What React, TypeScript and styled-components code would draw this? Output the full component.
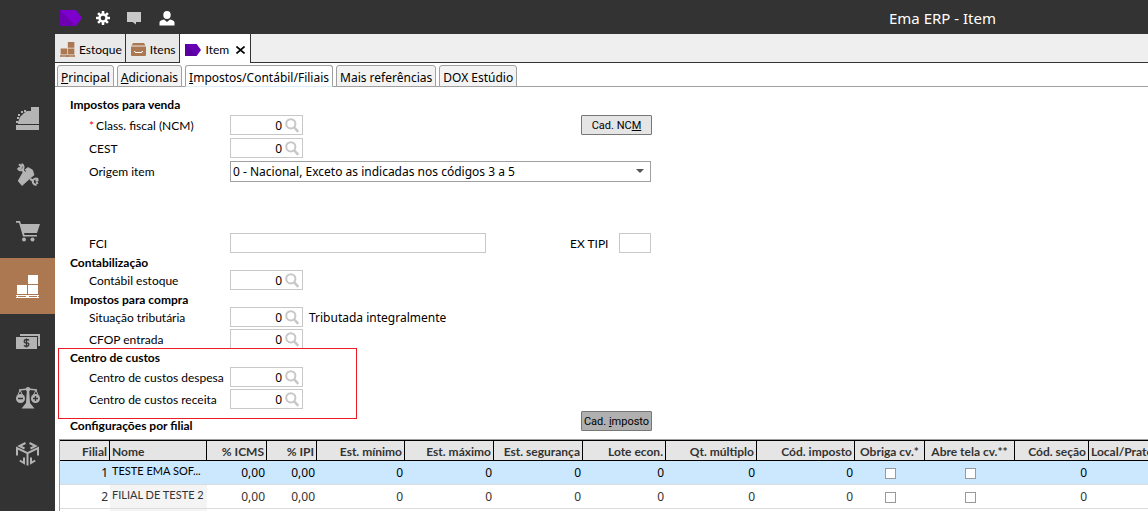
import React, { useState } from 'react';
import styled, { createGlobalStyle, css } from 'styled-components';

const GlobalStyle = createGlobalStyle`
  *, *::before, *::after { box-sizing: border-box; }
  body {
    margin: 0;
    background: #fff;
    color: #000;
    font: 12px/16px Lato, "Noto Sans", sans-serif;
  }
  button, input, select { font: inherit; color: inherit; margin: 0; }
`;

const humanist = '"Noto Sans", Lato, sans-serif';

const Shell = styled.div`
  display: flex;
  height: 100vh;
  overflow: hidden;
`;

const Sidebar = styled.nav`
  display: flex;
  flex-direction: column;
  flex: 0 0 55px;
  padding-top: 90px;
  background: #333;
`;

const SideButton = styled.button<{ $active?: boolean }>`
  display: flex;
  align-items: center;
  justify-content: center;
  flex: 0 0 56px;
  padding: 0;
  border: 0;
  color: ${p => (p.$active ? '#fff' : '#b4b4b4')};
  background: ${p => (p.$active ? '#ac7852' : 'transparent')};
`;

const Main = styled.div`
  display: flex;
  flex-direction: column;
  flex: 1;
  min-width: 0;
`;

const TopBar = styled.header`
  display: flex;
  align-items: center;
  justify-content: space-between;
  flex: 0 0 34px;
  padding: 2px 152px 0 4px;
  background: #333;
  color: #fff;
`;

const TopActions = styled.div`
  display: flex;
  gap: 9px;
`;

const TopButton = styled.button`
  display: flex;
  align-items: center;
  justify-content: center;
  width: 23px;
  height: 20px;
  padding: 0;
  border: 0;
  background: none;
  color: #fff;
`;

const Title = styled.h1`
  margin: 0;
  font-family: ${humanist};
  font-size: 15px;
  line-height: 20px;
  font-weight: 400;
`;

const WindowTabs = styled.div`
  display: flex;
  align-items: flex-start;
  flex: none;
  height: 29px;
  background: #efefef;
  border-bottom: 1px solid #333;
`;

const WindowTab = styled.button<{ $active?: boolean }>`
  display: flex;
  align-items: center;
  gap: ${p => (p.$active ? '5px' : '4px')};
  height: ${p => (p.$active ? '29px' : '28px')};
  padding: 3px ${p => (p.$active ? '5px' : '3px')} 0 5px;
  border: 0;
  border-right: 1px solid #333;
  background: ${p => (p.$active ? '#fff' : '#e9e9e9')};
`;

const PageTabs = styled.div`
  display: flex;
  gap: 3px;
  flex: none;
  height: 24px;
  padding: 2px 2px 0;
  border-bottom: 1px solid #a0a0a0;
`;

const PageTab = styled.button<{ $active?: boolean }>`
  height: 22px;
  padding: 3px 3px 0;
  border: 1px solid #a0a0a0;
  border-bottom-color: ${p => (p.$active ? '#d9eef8' : '#a0a0a0')};
  border-radius: 3px 3px 0 0;
  background: ${p => (p.$active ? '#fff' : '#f3f3f3')};
  font-family: ${humanist};
  white-space: nowrap;
`;

const Form = styled.form`
  display: flex;
  flex-direction: column;
  padding: 10px 0 0 3px;
`;

const Section = styled.section`
  padding: 0 12px 2px;
`;

const HighlightedSection = styled(Section)`
  width: 299px;
  padding: 1px 11px 9px;
  margin-top: -3px;
  border: 1px solid #ed1c24;
`;

const Fields = styled.div<{ $gap?: number; $lead?: number }>`
  display: flex;
  flex-direction: column;
  gap: ${p => p.$gap ?? 2}px;
  padding-top: ${p => p.$lead ?? 0}px;
`;

const Heading = styled.h2`
  margin: 0;
  font-size: 12px;
  line-height: 15px;
  font-weight: 700;
`;

const Row = styled.div<{ $spaced?: boolean }>`
  display: flex;
  align-items: center;
  height: 20px;
  padding-left: 19px;
  margin-top: ${p => (p.$spaced ? '49px' : '0')};
`;

const Label = styled.label`
  flex: 0 0 141px;
  padding-top: 2px;
  white-space: nowrap;
`;

const Required = styled.span`
  margin-right: 2px;
  color: #f00;
`;

const boxed = css`
  height: 20px;
  border: 1px solid #c8c8c8;
  background: #fff;
`;

const Lookup = styled.span`
  ${boxed}
  display: flex;
  align-items: center;
  flex: 0 0 73px;
`;

const LookupInput = styled.input`
  width: 51px;
  height: 18px;
  padding: 0;
  border: 0;
  outline: 0;
  background: none;
  font-family: ${humanist};
  text-align: right;
`;

const LookupButton = styled.button`
  display: flex;
  padding: 0;
  margin-left: 3px;
  border: 0;
  background: none;
  color: #c8c8c8;
`;

const TextInput = styled.input<{ $width: number }>`
  ${boxed}
  width: ${p => p.$width}px;
  padding: 0 3px;
`;

const SideLabel = styled.label`
  width: 49px;
  margin-left: 84px;
  padding-top: 2px;
  white-space: nowrap;
`;

const Description = styled.span`
  padding: 2px 0 0 6px;
  font-family: ${humanist};
`;

const SelectWrap = styled.span`
  display: flex;
  align-items: center;
  width: 421px;
  height: 21px;
  padding-right: 6px;
  border: 1px solid #a0a0a0;
  color: #555;
`;

const Select = styled.select`
  flex: 1;
  height: 19px;
  padding: 1px 2px 0;
  border: 0;
  background: none;
  color: #000;
  font-family: ${humanist};
  appearance: none;
`;

const Button = styled.button<{ $pressed?: boolean }>`
  width: 71px;
  height: 20px;
  padding: 1px 0 0;
  border: 1px solid #777;
  border-radius: 1px;
  background: ${p => (p.$pressed ? '#b0b0b0' : '#e5e5e5')};
  font: 11px/16px Roboto, "Liberation Sans", sans-serif;
`;

const ButtonSlot = styled.span`
  margin-left: 278px;
  display: flex;
`;

const BranchBar = styled.div`
  display: flex;
  align-items: flex-start;
  padding: 0 12px;
  margin-top: -8px;
`;

const BranchHeading = styled(Heading)`
  flex: 0 0 511px;
  padding-top: 7px;
`;

const TableFrame = styled.div`
  flex: none;
  margin: 6px 0 0 4px;
  overflow: hidden;
  border-top: 1px solid #a0a0a0;
  border-left: 1px solid #a0a0a0;
`;

const Table = styled.table`
  width: 1189px;
  table-layout: fixed;
  border-collapse: separate;
  border-spacing: 0;
`;

const Th = styled.th<{ $align?: string }>`
  height: 21px;
  padding: 2px 2px 0;
  border: solid #000;
  border-width: 1px 1px 1px 0;
  background: #e5e5e5;
  color: #333;
  font-weight: 700;
  line-height: 16px;
  text-align: ${p => p.$align ?? 'right'};
  white-space: nowrap;
`;

const Tr = styled.tr<{ $selected?: boolean }>`
  background: ${p => (p.$selected ? '#cce8ff' : '#fff')};
  color: ${p => (p.$selected ? '#000' : '#333')};
`;

const Td = styled.td<{ $center?: boolean }>`
  height: 24px;
  padding: 1px 2px 0;
  border-bottom: 1px solid #dcdcdc;
  font-family: ${humanist};
  text-align: ${p => (p.$center ? 'center' : 'right')};
  vertical-align: middle;
`;

const NameTd = styled.td<{ $selected?: boolean }>`
  height: 24px;
  padding: 0 2px 3px;
  border-bottom: 1px solid #dcdcdc;
  background: ${p => (p.$selected ? 'transparent' : '#f4f4f4')};
  font-size: 11px;
  text-align: left;
  white-space: nowrap;
`;

const Checkbox = styled.input`
  display: block;
  width: 11px;
  height: 11px;
  margin: 0 auto;
  border: 1px solid #999;
  background: #fff;
  appearance: none;
`;

const TagIcon = ({ w = 22, h = 16, color = '#7d00cc' }) => (
  <svg width={w} height={h} viewBox="0 0 22 16" preserveAspectRatio="none" aria-hidden="true">
    <path d="M0 0h16l6 8-6 8H0z" fill={color} />
    <path d="M0 0l16 16H0z" fill="#000" opacity=".12" />
  </svg>
);

const GearIcon = () => (
  <svg width="14" height="14" viewBox="0 0 14 14" aria-hidden="true">
    <g fill="currentColor">
      {[0, 45, 90, 135].map(a => (
        <rect key={a} x="5.7" y="0" width="2.6" height="14" rx=".4" transform={`rotate(${a} 7 7)`} />
      ))}
      <circle cx="7" cy="7" r="4.700" />
    </g>
    <circle cx="7" cy="7" r="2.3" fill="#333" />
  </svg>
);

const ChatIcon = () => (
  <svg width="15" height="14" viewBox="0 0 15 14" aria-hidden="true">
    <path d="M0 1h14v10H9v2.5L5.500 11H0z" fill="#c8c8c8" />
  </svg>
);

const UserIcon = () => (
  <svg width="16" height="15" viewBox="0 0 16 15" aria-hidden="true">
    <ellipse cx="8" cy="4" rx="3.700" ry="4" fill="currentColor" />
    <path d="M.5 14.500V11.500Q.5 9.500 5 8.500l3 2.500 3-2.500q4.500 1 4.500 3v3z" fill="currentColor" />
  </svg>
);

const PalletIcon = ({ w = 23, h = 23, line = '#fff' }) => (
  <svg width={w} height={h} viewBox="0 0 23 23" aria-hidden="true">
    <path d="M12 0h10v9H12zM1 10h10v9H1zM12 10h10v9H12zM0 20h23v1H0zM0 22h23v1H0zM1 20h1v2H1zM10 20h3v2h-3zM21 20h1v2h-1z" fill={line} />
  </svg>
);

const BoxIcon = () => (
  <svg width="15" height="13" viewBox="0 0 15 13" aria-hidden="true">
    <path d="M2 0h11l1.500 2.500H.5z" fill="#ac7852" />
    <path d="M0 3.500h15V12a1 1 0 0 1-1 1H1a1 1 0 0 1-1-1z" fill="#ac7852" />
    <path d="M3.500 8q0 1.500 1.500 1.500h5q1.500 0 1.500-1.500" fill="none" stroke="#fff" />
  </svg>
);

const CloseSvg = styled.svg`
  margin-left: 2px;
`;

const CloseIcon = () => (
  <CloseSvg width="9" height="8" viewBox="0 0 9 8" aria-hidden="true">
    <path d="M.5.5l8 7M8.500.5l-8 7" stroke="#000" strokeWidth="1.600" />
  </CloseSvg>
);

const RegisterIcon = () => (
  <svg width="23" height="23" viewBox="0 0 23 23" aria-hidden="true" fill="currentColor">
    <path d="M15 0h8v17H2v-2l2-5 4-4 3-2h4zM0 18h23v5H0z" />
    <path d="M0 14h2v2H0zM1 10h2v2H1zM2 7h2v2H2zM5 4h2v2H5zM8 3h2v2H8z" />
  </svg>
);

const ToolsIcon = () => (
  <svg width="23" height="23" viewBox="0 0 23 23" aria-hidden="true" fill="none" stroke="currentColor">
    <path d="M3 1.200L5.200 3.200 4.800 5 2 5.200M1.800 5.200a3 3 0 0 0 5 1.200 3.500 3.500 0 0 0-1.300-5.400" strokeWidth="2" />
    <path d="M6 6.500l3 3.500M14 16l3 1.500" strokeWidth="2.400" />
    <path d="M8 7.500L12 4.500 16.500 7 18 12 15.500 14 6 22.500 2.200 18z" fill="currentColor" strokeWidth=".8" />
    <path d="M8 7l2 1.500" stroke="#333" strokeWidth="1" />
    <path d="M22 16.500a3 3 0 0 0-5 1 3.200 3.200 0 0 0 3.500 4.200M22.500 17l-3 .8M21.500 21l-1-2" strokeWidth="2" />
  </svg>
);

const CartIcon = () => (
  <svg width="24" height="24" viewBox="0 -3 24 24" aria-hidden="true" fill="currentColor">
    <path d="M0 0h4l1 3h19l-3 9H8l.5 2H21v1.500H7L3 1.800H0z" />
    <circle cx="8" cy="18.500" r="2" />
    <circle cx="16.500" cy="18.500" r="2" />
  </svg>
);

const MoneyIcon = () => (
  <svg width="24" height="16" viewBox="0 0 24 16" aria-hidden="true">
    <path d="M4 0h20v12h-2V2H4z" fill="currentColor" />
    <path d="M0 3h21v12H0z" fill="currentColor" />
    <path d="M13 6.500q-.5-1-2.500-1T8.200 7.200t2.300 1.700 2.300 1.800-2.300 1.700-2.500-1M10.500 4.500v9" fill="none" stroke="#333" strokeWidth="1.300" />
  </svg>
);

const ScaleIcon = () => (
  <svg width="24" height="22" viewBox="0 0 24 22" aria-hidden="true">
    <path d="M12 2v17M3 3q5-.5 9-1 4 .5 9 1" fill="none" stroke="currentColor" strokeWidth="1.500" />
    <circle cx="12" cy="2.200" r="2.200" fill="currentColor" />
    <path d="M10.800 4h2.400l.8 12 4.500 5.500h-13L10 16z" fill="currentColor" />
    <path d="M4 3L2 8M4 3l2.500 5M20 3l2 5M20 3l-2.500 5" stroke="currentColor" />
    <circle cx="4.500" cy="11.500" r="4.500" fill="currentColor" />
    <circle cx="19.500" cy="11.500" r="4.500" fill="currentColor" />
    <path d="M2 11.500h5M17 11.500h5M19.500 9v5" stroke="#333" strokeWidth="1.300" />
  </svg>
);

const CubeIcon = () => (
  <svg width="23" height="24" viewBox="0 0 23 24" aria-hidden="true" fill="none" stroke="currentColor" strokeWidth="2">
    <path d="M9.500 1L3.500 4 8.500 6.500M13.500 1L19.500 4 14.500 6.500" />
    <path d="M1 13.500V6L11.500 11.200 22 6v7.500M11.500 11v12.500" />
    <path d="M8 15.500V21L3.800 18.500M15 15.500V21l4.200-2.500" />
  </svg>
);

const SearchIcon = () => (
  <svg width="14" height="15" viewBox="0 0 14 15" aria-hidden="true" fill="none" stroke="currentColor">
    <circle cx="5.800" cy="5.800" r="4.600" strokeWidth="2" />
    <path d="M9 9.200l4.300 4.600" strokeWidth="2.600" />
  </svg>
);

const ArrowIcon = () => (
  <svg width="8" height="4" viewBox="0 0 8 4" aria-hidden="true">
    <path d="M0 0h8L4 4z" fill="currentColor" />
  </svg>
);

const sideItems = [
  { name: 'Caixa', icon: <RegisterIcon /> },
  { name: 'Serviços', icon: <ToolsIcon /> },
  { name: 'Compras', icon: <CartIcon /> },
  { name: 'Estoque', icon: <PalletIcon />, active: true },
  { name: 'Financeiro', icon: <MoneyIcon /> },
  { name: 'Fiscal', icon: <ScaleIcon /> },
  { name: 'Produção', icon: <CubeIcon /> },
];

const columns: { title: string; width: number; align?: string }[] = [
  { title: 'Filial', width: 50 },
  { title: 'Nome', width: 97, align: 'left' },
  { title: '% ICMS', width: 60 },
  { title: '% IPI', width: 50 },
  { title: 'Est. mínimo', width: 88 },
  { title: 'Est. máximo', width: 89 },
  { title: 'Est. segurança', width: 89 },
  { title: 'Lote econ.', width: 83 },
  { title: 'Qt. múltiplo', width: 91 },
  { title: 'Cód. imposto', width: 98 },
  { title: 'Obriga cv.*', width: 70, align: 'center' },
  { title: 'Abre tela cv.**', width: 90, align: 'center' },
  { title: 'Cód. seção', width: 74 },
  { title: 'Local/Prateleira', width: 160, align: 'left' },
];

const branches = [
  { id: '1', name: 'TESTE EMA SOF...' },
  { id: '2', name: 'FILIAL DE TESTE 2' },
  { id: '', name: '' },
];

function LookupField({ id, label, required, children }: {
  id: string;
  label: string;
  required?: boolean;
  children?: React.ReactNode;
}) {
  const [value, setValue] = useState('0');
  return (
    <Row>
      <Label htmlFor={id}>
        {required && <Required>*</Required>}
        {label}
      </Label>
      <Lookup>
        <LookupInput id={id} value={value} onChange={e => setValue(e.target.value)} />
        <LookupButton type="button" aria-label={`Pesquisar ${label}`}>
          <SearchIcon />
        </LookupButton>
      </Lookup>
      {children}
    </Row>
  );
}

export default function App() {
  return (
    <>
      <GlobalStyle />
      <Shell>
        <Sidebar>
          {sideItems.map(item => (
            <SideButton key={item.name} $active={item.active} aria-label={item.name}>
              {item.icon}
            </SideButton>
          ))}
        </Sidebar>
        <Main>
          <TopBar>
            <TopActions>
              <TopButton aria-label="Item"><TagIcon /></TopButton>
              <TopButton aria-label="Configurações"><GearIcon /></TopButton>
              <TopButton aria-label="Mensagens"><ChatIcon /></TopButton>
              <TopButton aria-label="Usuário"><UserIcon /></TopButton>
            </TopActions>
            <Title>Ema ERP - Item</Title>
          </TopBar>
          <WindowTabs>
            <WindowTab><PalletIcon w={15} h={15} line="#ac7852" />Estoque</WindowTab>
            <WindowTab><BoxIcon />Itens</WindowTab>
            <WindowTab $active><TagIcon w={16} h={12} color="#6600b3" />Item<CloseIcon /></WindowTab>
          </WindowTabs>
          <PageTabs>
            <PageTab><u>P</u>rincipal</PageTab>
            <PageTab><u>A</u>dicionais</PageTab>
            <PageTab $active><u>I</u>mpostos/Contábil/Filiais</PageTab>
            <PageTab>Mais referências</PageTab>
            <PageTab>DOX Estúdio</PageTab>
          </PageTabs>
          <Form onSubmit={e => e.preventDefault()}>
            <Section>
              <Heading>Impostos para venda</Heading>
              <Fields $gap={3} $lead={3}>
                <LookupField id="ncm" label="Class. fiscal (NCM)" required>
                  <ButtonSlot><Button type="button">Cad. NC<u>M</u></Button></ButtonSlot>
                </LookupField>
                <LookupField id="cest" label="CEST" />
                <Row>
                  <Label htmlFor="origem">Origem item</Label>
                  <SelectWrap>
                    <Select id="origem">
                      <option>0 - Nacional, Exceto as indicadas nos códigos 3 a 5</option>
                    </Select>
                    <ArrowIcon />
                  </SelectWrap>
                </Row>
                <Row $spaced>
                  <Label htmlFor="fci">FCI</Label>
                  <TextInput id="fci" $width={256} />
                  <SideLabel htmlFor="extipi">EX TIPI</SideLabel>
                  <TextInput id="extipi" $width={32} />
                </Row>
              </Fields>
            </Section>
            <Section>
              <Heading>Contabilização</Heading>
              <Fields>
                <LookupField id="contabil" label="Contábil estoque" />
              </Fields>
            </Section>
            <Section>
              <Heading>Impostos para compra</Heading>
              <Fields>
                <LookupField id="situacao" label="Situação tributária">
                  <Description>Tributada integralmente</Description>
                </LookupField>
                <LookupField id="cfop" label="CFOP entrada" />
              </Fields>
            </Section>
            <HighlightedSection>
              <Heading>Centro de custos</Heading>
              <Fields $lead={2}>
                <LookupField id="despesa" label="Centro de custos despesa" />
                <LookupField id="receita" label="Centro de custos receita" />
              </Fields>
            </HighlightedSection>
            <BranchBar>
              <BranchHeading>Configurações por filial</BranchHeading>
              <Button type="button" $pressed>Cad. <u>i</u>mposto</Button>
            </BranchBar>
          </Form>
          <TableFrame>
            <Table>
              <colgroup>
                {columns.map(c => <col key={c.title} width={c.width} />)}
              </colgroup>
              <thead>
                <tr>
                  {columns.map(c => <Th key={c.title} $align={c.align}>{c.title}</Th>)}
                </tr>
              </thead>
              <tbody>
                {branches.map((b, i) => (
                  <Tr key={i} $selected={i === 0}>
                    <Td>{b.id}</Td>
                    <NameTd $selected={i === 0}>{b.name}</NameTd>
                    {columns.slice(2).map((c, n) => (
                      <Td key={c.title} $center={c.align === 'center'}>
                        {b.id && (c.align === 'center'
                          ? <Checkbox type="checkbox" aria-label={`${c.title} filial ${b.id}`} />
                          : c.align ? '' : n < 2 ? '0,00' : '0')}
                      </Td>
                    ))}
                  </Tr>
                ))}
              </tbody>
            </Table>
          </TableFrame>
        </Main>
      </Shell>
    </>
  );
}
